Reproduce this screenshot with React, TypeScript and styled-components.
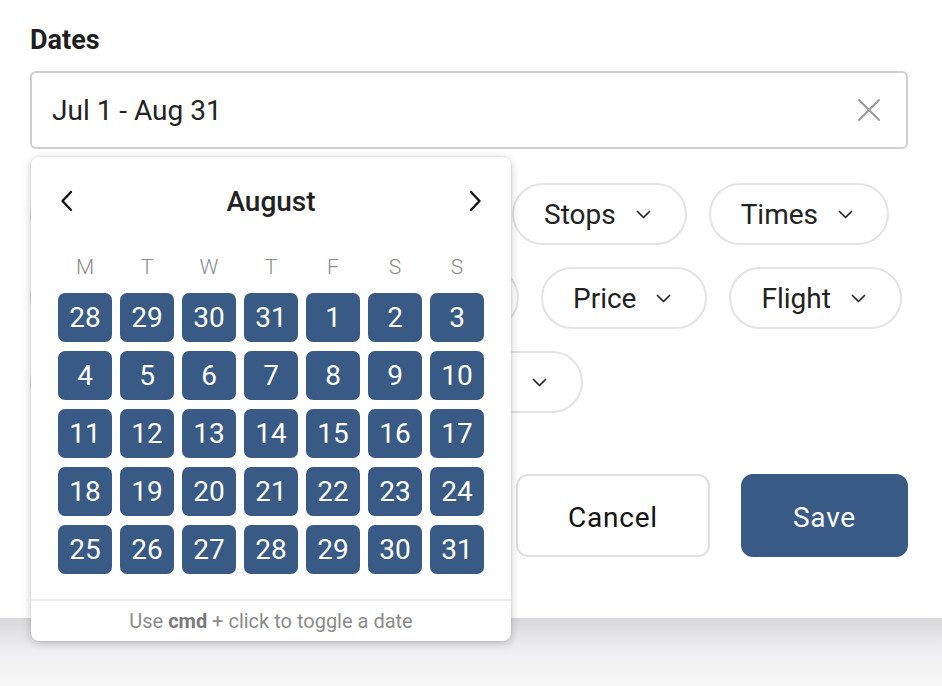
import styled, { createGlobalStyle } from 'styled-components';

const GlobalStyle = createGlobalStyle`
    body {
        margin: 0;
        background-color: #f6f6f7;
        font-family: Roboto, "Liberation Sans", sans-serif;
        color: #222;
    }
    * {
        box-sizing: border-box;
    }
`

const Sheet = styled.div`
    background-color: white;
    height: 618px;
    padding: 24px 34px 0 30px;
`
const Label = styled.div`
    font-size: 27px;
    font-weight: 700;
    height: 32px;
    line-height: 32px;
    margin-bottom: 15px;
    color: #1f1f1f;
`
const Field = styled.div`
    position: relative;
`
const Input = styled.div`
    height: 78px;
    border: 2px solid #cfcfcf;
    border-radius: 6px;
    padding: 0 25px 0 20px;
    display: flex;
    align-items: center;
    justify-content: space-between;
    font-size: 28px;
    color: #222;
`
const ClearButton = styled.span`
    display: flex;
    color: #9a9a9a;
`

const Popover = styled.div`
    position: absolute;
    top: calc(100% + 8px);
    left: 1px;
    width: 480px;
    z-index: 10;
    background-color: white;
    border-radius: 8px;
    box-shadow: 0 2px 10px rgba(0,0,0,0.22), 0 0 0 1px rgba(0,0,0,0.04);
    padding-top: 16px;
`
const CalHeader = styled.div`
    height: 56px;
    padding: 0 29px;
    display: flex;
    align-items: center;
    justify-content: space-between;
`
const Month = styled.div`
    font-size: 28px;
    font-weight: 500;
    color: #222;
`
const NavArrow = styled.span`
    display: flex;
    color: #111;
`
const Weekdays = styled.div`
    display: grid;
    grid-template-columns: repeat(7, 54px);
    column-gap: 8px;
    justify-content: center;
    margin-top: 25px;
    height: 26px;
    line-height: 26px;
    font-size: 21px;
    font-weight: 300;
    color: #8a8a8a;
    text-align: center;
`
const Days = styled.div`
    display: grid;
    grid-template-columns: repeat(7, 54px);
    grid-auto-rows: 49px;
    gap: 9px 8px;
    justify-content: center;
    margin-top: 13px;
`
const Day = styled.div`
    background-color: #3a5a86;
    border-radius: 7px;
    color: white;
    font-size: 28px;
    line-height: 1;
    display: flex;
    align-items: center;
    justify-content: center;
`
const Hint = styled.div`
    margin-top: 25px;
    border-top: 2px solid #efefef;
    height: 42px;
    line-height: 40px;
    text-align: center;
    font-size: 20px;
    color: #8b8b8b;
    b {
        font-weight: 700;
        color: #7a7a7a;
    }
`

const Filters = styled.div`
    margin-top: 34px;
    display: flex;
    flex-direction: column;
    gap: 22px;
`
const FilterRow = styled.div`
    display: flex;
    gap: 22px;
`
const Chip = styled.div<{ $width?: number }>`
    height: 62px;
    width: ${(props) => (props.$width ? `${props.$width}px` : 'auto')};
    border: 2px solid #e3e3e3;
    border-radius: 31px;
    padding: 0 34px 0 30px;
    display: flex;
    align-items: center;
    justify-content: space-between;
    gap: 20px;
    font-size: 28px;
    color: #222;
`

const Actions = styled.div`
    margin-top: 61px;
    display: flex;
    justify-content: flex-end;
    gap: 31px;
`
const Button = styled.button<{ $primary?: boolean }>`
    height: 83px;
    padding: 0 50px;
    border-radius: 12px;
    font-family: Roboto, sans-serif;
    font-size: 28px;
    letter-spacing: 0.8px;
    padding-top: 4px;
    border: 2px solid ${(props) => (props.$primary ? '#3a5a86' : '#e0e0e0')};
    background-color: ${(props) => (props.$primary ? '#3a5a86' : 'white')};
    color: ${(props) => (props.$primary ? 'white' : '#111')};
`

const Shade = styled.div`
    height: 68px;
    background: linear-gradient(#d8d8db, #eeeef0 45%, #f7f7f8);
`

const Chevron = () => (
    <svg width="15" height="9" viewBox="0 0 15 9" fill="none">
        <path d="M1.5 1.5 L7.5 7.5 L13.5 1.5" stroke="currentColor" strokeWidth="1.7" strokeLinecap="round" strokeLinejoin="round" />
    </svg>
);

const Arrow = ({ dir }: { dir: 'left' | 'right' }) => (
    <svg width="13" height="22" viewBox="0 0 13 22" fill="none">
        <path
            d={dir === 'left' ? 'M11 2 L2.5 11 L11 20' : 'M2 2 L10.5 11 L2 20'}
            stroke="currentColor"
            strokeWidth="2.4"
            strokeLinecap="round"
            strokeLinejoin="round"
        />
    </svg>
);

const weekdays = ['M', 'T', 'W', 'T', 'F', 'S', 'S'];
const days = [28, 29, 30, 31, ...Array.from({ length: 31 }, (_, i) => i + 1)];

function App() {
    return (
        <>
            <GlobalStyle />
            <Sheet>
                <Label>Dates</Label>
                <Field>
                    <Input>
                        <span>Jul 1 - Aug 31</span>
                        <ClearButton>
                            <svg width="24" height="24" viewBox="0 0 24 24" fill="none">
                                <path d="M2 2 L22 22 M22 2 L2 22" stroke="currentColor" strokeWidth="2" strokeLinecap="round" />
                            </svg>
                        </ClearButton>
                    </Input>
                    <Popover>
                        <CalHeader>
                            <NavArrow><Arrow dir="left" /></NavArrow>
                            <Month>August</Month>
                            <NavArrow><Arrow dir="right" /></NavArrow>
                        </CalHeader>
                        <Weekdays>
                            {weekdays.map((d, i) => <div key={i}>{d}</div>)}
                        </Weekdays>
                        <Days>
                            {days.map((d, i) => <Day key={i}>{d}</Day>)}
                        </Days>
                        <Hint>Use <b>cmd</b> + click to toggle a date</Hint>
                    </Popover>
                </Field>
                <Filters>
                    <FilterRow>
                        <Chip $width={219}>Airlines <Chevron /></Chip>
                        <Chip $width={219}>Bags <Chevron /></Chip>
                        <Chip>Stops <Chevron /></Chip>
                        <Chip>Times <Chevron /></Chip>
                    </FilterRow>
                    <FilterRow>
                        <Chip $width={233}>Duration <Chevron /></Chip>
                        <Chip $width={234}>Cabin <Chevron /></Chip>
                        <Chip>Price <Chevron /></Chip>
                        <Chip>Flight <Chevron /></Chip>
                    </FilterRow>
                    <FilterRow>
                        <Chip $width={553}>Connecting airports <Chevron /></Chip>
                    </FilterRow>
                </Filters>
                <Actions>
                    <Button>Cancel</Button>
                    <Button $primary>Save</Button>
                </Actions>
            </Sheet>
            <Shade />
        </>
    );
}

export default App;
